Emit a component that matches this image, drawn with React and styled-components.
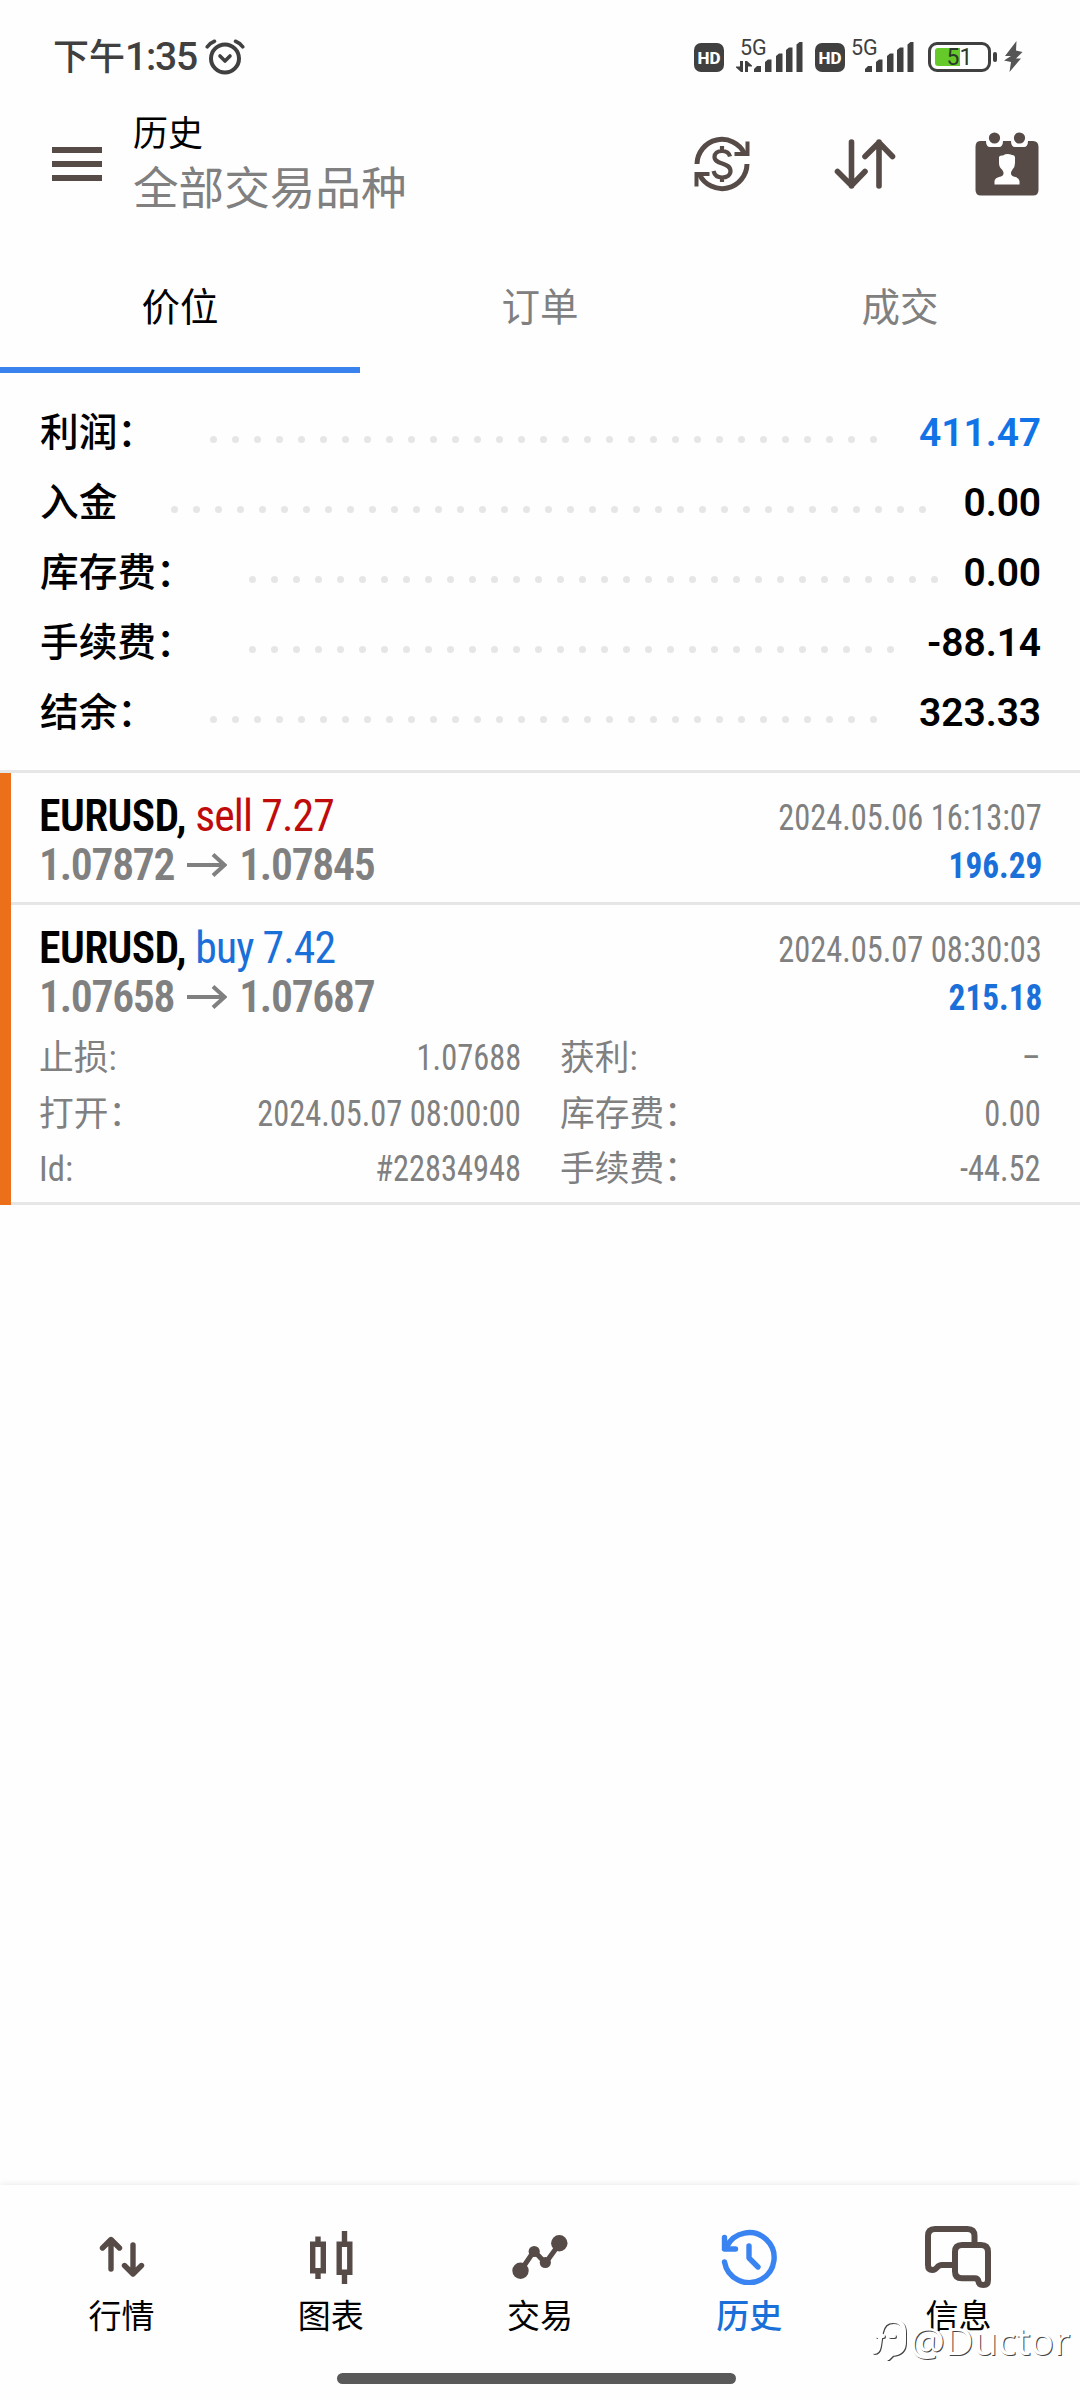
import React from "react";
import styled, { createGlobalStyle } from "styled-components";

const summary = [
  { label: "利润：", value: "411.47", blue: true },
  { label: "入金", value: "0.00" },
  { label: "库存费：", value: "0.00" },
  { label: "手续费：", value: "-88.14" },
  { label: "结余：", value: "323.33" },
];

const deals = [
  {
    symbol: "EURUSD",
    side: "sell",
    volume: "7.27",
    open: "1.07872",
    close: "1.07845",
    time: "2024.05.06 16:13:07",
    profit: "196.29",
    details: [],
  },
  {
    symbol: "EURUSD",
    side: "buy",
    volume: "7.42",
    open: "1.07658",
    close: "1.07687",
    time: "2024.05.07 08:30:03",
    profit: "215.18",
    details: [
      ["止损:", "1.07688"],
      ["获利:", "–"],
      ["打开：", "2024.05.07 08:00:00"],
      ["库存费：", "0.00"],
      ["Id:", "#22834948"],
      ["手续费：", "-44.52"],
    ],
  },
];

const AlarmIcon = () => (
  <svg width="40" height="36" viewBox="0 0 40 36" fill="none" stroke="#404040" strokeLinecap="round">
    <circle cx="20" cy="19.5" r="14" strokeWidth="4" />
    <path d="M15 17l5 5 5-5" strokeWidth="3.6" strokeLinejoin="round" />
    <path d="M2.3 7.8Q5 4 9.5 2.3M37.7 7.8Q35 4 30.5 2.3" strokeWidth="3.6" />
  </svg>
);

const Signal = () => (
  <svg width="49" height="32" viewBox="0 0 49 32" fill="#404040">
    <path d="M0 31V28L3 25H7V31Z" />
    <path d="M11 31V21L14 18.5H17.5V31Z" />
    <path d="M22 31V15L25 12.5H28.5V31Z" />
    <path d="M32 31V9L35 6.5H38.5V31Z" />
    <path d="M42.5 31V3.5L45.5 1H48.5V31Z" />
  </svg>
);

const DataArrows = () => (
  <svg width="16" height="12" viewBox="0 0 16 12" fill="#404040">
    <path d="M4 0H7V11H5L0 6.5V5.5H4Z" />
    <path d="M9 11V0H11L16 4.5V5.5H12V11Z" />
  </svg>
);

const Bolt = () => (
  <svg width="19" height="32" viewBox="0 0 19 32" fill="#555">
    <path d="M12.5 0L1 15H7L0 19.5L7 21L5.5 31L17 17.5H12L18.5 11L12 9.5Z" />
  </svg>
);

const MenuIcon = () => (
  <svg width="50" height="34" viewBox="0 0 50 34" fill="#564b47">
    <rect width="50" height="6" />
    <rect y="14" width="50" height="6" />
    <rect y="28" width="50" height="6" />
  </svg>
);

const CurrencyIcon = () => (
  <svg width="56" height="56" viewBox="0 0 56 56" fill="none" stroke="#564b47" strokeWidth="5">
    <path d="M3 28A25 25 0 0 1 50.5 17.5" />
    <path d="M53 28A25 25 0 0 1 5.5 38.5" />
    <path d="M40.5 18H53.5V5.5" strokeWidth="4" />
    <path d="M15.5 38H2.5V50.5" strokeWidth="4" />
    <path
      d="M36 20.5C35 16.5 31.5 15 28 15C23.5 15 20.5 17.5 20.5 21C20.5 29 36.5 26 36.5 35C36.5 39 33 41.5 28 41.5C23.5 41.5 20.5 39 19.5 35M28 10V15.5M28 41V46"
      strokeWidth="4.2"
    />
  </svg>
);

const SortIcon = () => (
  <svg width="62" height="50" viewBox="0 0 62 50" fill="none" stroke="#564b47" strokeWidth="5.6" strokeLinecap="round" strokeLinejoin="round">
    <path d="M17.5 3V47M3.5 32.5L17.5 46.5L31 32.5" />
    <path d="M45 47V3M31 17.5L45 3.5L58.5 17.5" />
  </svg>
);

const CalendarIcon = () => (
  <svg width="64" height="64" viewBox="0 0 64 64">
    <path
      fill="#564b47"
      d="M5 9H11C11 13 12.5 15 15 15H24C26.5 15 28 13 28 9H36C36 13 37.5 15 40 15H49C51.5 15 53 13 53 9H58Q63.5 9 63.5 15V58Q63.5 63.5 58 63.5H6Q0.5 63.5 0.5 58V15Q0.5 9 5 9Z"
    />
    <circle cx="19.5" cy="6" r="5.6" fill="#564b47" />
    <circle cx="44.5" cy="6" r="5.6" fill="#564b47" />
    <path
      fill="#fff"
      d="M19.5 52.5V49Q20 46 24 45Q28.5 44 28.5 41.5Q28.5 39.5 27 37.5Q24 35 24 31V25Q24.5 23 28 23.5Q32 21 37 23Q40.5 23 40 27V31Q40 35 37.5 37.5Q36 39.5 36 41.5Q36 44 40.5 45Q44 46 44.5 49V52.5Z"
    />
  </svg>
);

const QuotesIcon = () => (
  <svg width="46" height="42" viewBox="0 0 46 42" fill="none" stroke="#564b47" strokeWidth="5.4" strokeLinecap="round" strokeLinejoin="round">
    <path d="M12 33V4M3.5 12L12 3.5L20.5 12" />
    <path d="M34 9V37M25.5 29.5L34 38L42.5 29.5" />
  </svg>
);

const ChartIcon = () => (
  <svg width="44" height="54" viewBox="0 0 44 54" fill="none" stroke="#564b47" strokeWidth="5.4">
    <path d="M3.7 14.2H14.3V40.8H3.7ZM9 6.5V14M9 41V49" />
    <path d="M30.2 14.2H40.8V42.3H30.2ZM35.5 1V14M35.5 42V54" />
  </svg>
);

const TradeIcon = () => (
  <svg width="56" height="46" viewBox="0 0 56 46" fill="#564b47">
    <path d="M8.5 37L22 17L33.5 29L48 9" fill="none" stroke="#564b47" strokeWidth="5" />
    <circle cx="8.5" cy="36.7" r="8.2" />
    <circle cx="22.2" cy="17.5" r="5.6" />
    <circle cx="33.3" cy="28.5" r="5.6" />
    <circle cx="47.3" cy="9.2" r="8.2" />
  </svg>
);

const HistoryIcon = () => (
  <svg width="56" height="56" viewBox="0 0 56 56" fill="none" stroke="#3a84f2" strokeWidth="5.4" strokeLinecap="round" strokeLinejoin="round">
    <path d="M3.5 33A25 25 0 1 0 5.5 18" />
    <path d="M3.5 8.5V20H14.5M3.5 20L8 14" />
    <path d="M28 17V29L37 38" />
  </svg>
);

const MessagesIcon = () => (
  <svg width="66" height="62" viewBox="0 0 66 62" fill="none" stroke="#564b47" strokeWidth="6" strokeLinejoin="round">
    <path d="M49.5 17V10Q49.5 3 42.5 3H10Q3 3 3 10V39Q3 44 7.5 44Q10 44 12 41.5Q14 39 17 39H28" />
    <path d="M37 19H56Q63 19 63 26V54Q63 59 58.5 59Q53.8 59 53.5 55.5Q53 52.3 49.5 52.3H37Q30 52.3 30 45.5V26Q30 19 37 19Z" />
  </svg>
);

const MarkIcon = () => (
  <svg width="38" height="44" viewBox="0 0 38 44" fill="none" strokeWidth="4" strokeLinecap="round">
    <path
      stroke="#444"
      transform="translate(1 1)"
      d="M3 34Q7 34 8 28L10 14Q12 3 22 3Q33 3 33 14V24Q33 35 21 36L17 40M6 18H12M19 18H23"
    />
    <path
      stroke="#fff"
      d="M3 34Q7 34 8 28L10 14Q12 3 22 3Q33 3 33 14V24Q33 35 21 36L17 40M6 18H12M19 18H23"
    />
  </svg>
);

const navItems = [
  { label: "行情", icon: <QuotesIcon /> },
  { label: "图表", icon: <ChartIcon /> },
  { label: "交易", icon: <TradeIcon /> },
  { label: "历史", icon: <HistoryIcon />, active: true },
  { label: "信息", icon: <MessagesIcon /> },
];

const Cellular = ({ data }) => (
  <Network>
    <Generation $data={data}>5G</Generation>
    <NetworkBars>
      <DataSlot $data={data}>{data && <DataArrows />}</DataSlot>
      <Signal />
    </NetworkBars>
  </Network>
);

const Deal = ({ deal }) => (
  <DealWrap $expanded={deal.details.length > 0}>
    <DealLine>
      <Symbol>
        {deal.symbol}, <Side $side={deal.side}>{deal.side} {deal.volume}</Side>
      </Symbol>
      <Time>{deal.time}</Time>
    </DealLine>
    <DealLine>
      <Prices>
        {deal.open}
        <Arrow width="40" height="24" viewBox="0 0 40 24">
          <path d="M0 12H37M26 1.5L37.5 12L26 22.5" />
        </Arrow>
        {deal.close}
      </Prices>
      <Profit>{deal.profit}</Profit>
    </DealLine>
    {deal.details.length > 0 && (
      <Details>
        {deal.details.map(([label, value]) => (
          <Detail key={label}>
            <span>{label}</span>
            <DetailValue>{value}</DetailValue>
          </Detail>
        ))}
      </Details>
    )}
  </DealWrap>
);

const App = () => {
  return (
    <Screen>
      <GlobalStyle />
      <StatusBar>
        <Clock>下午<ClockDigits>1:35</ClockDigits></Clock>
        <AlarmIcon />
        <StatusIcons>
          <HdBadge>HD</HdBadge>
          <Cellular data />
          <HdBadge>HD</HdBadge>
          <Cellular />
          <Battery>
            <BatteryFill />
            <BatteryText>51</BatteryText>
          </Battery>
          <BatteryTip />
          <Bolt />
        </StatusIcons>
      </StatusBar>

      <Header>
        <MenuIcon />
        <Titles>
          <Title>历史</Title>
          <SubTitle>全部交易品种</SubTitle>
        </Titles>
        <Actions>
          <CurrencyIcon />
          <SortIcon />
          <CalendarIcon />
        </Actions>
      </Header>

      <Tabs>
        <Tab $active>价位</Tab>
        <Tab>订单</Tab>
        <Tab>成交</Tab>
      </Tabs>

      <Summary>
        {summary.map((row) => (
          <SummaryRow key={row.label}>
            <SummaryLabel>{row.label}</SummaryLabel>
            <Dots>
              {Array.from({ length: 40 }, (_, i) => (
                <Dot key={i} />
              ))}
            </Dots>
            <SummaryValue $blue={row.blue}>{row.value}</SummaryValue>
          </SummaryRow>
        ))}
      </Summary>

      <DealList>
        {deals.map((deal) => (
          <Deal key={deal.time} deal={deal} />
        ))}
      </DealList>

      <Nav>
        <NavItems>
          {navItems.map((item) => (
            <NavItem key={item.label} $active={item.active}>
              <NavIcon>{item.icon}</NavIcon>
              {item.label}
            </NavItem>
          ))}
        </NavItems>
        <HomeBar />
        <Watermark>
          <MarkIcon />
          <span>@Ductor</span>
        </Watermark>
      </Nav>
    </Screen>
  );
};

const GlobalStyle = createGlobalStyle`
  * {
    box-sizing: border-box;
  }
  body {
    margin: 0;
    background: #fefefe;
    font-family: Roboto, "Noto Sans CJK SC", sans-serif;
  }
  svg {
    display: block;
    flex-shrink: 0;
  }
`;

const Screen = styled.div`
  display: flex;
  flex-direction: column;
  width: 1080px;
  height: 2400px;
  overflow: hidden;
  background: #fefefe;
`;

const StatusBar = styled.div`
  display: flex;
  align-items: center;
  height: 113px;
  padding: 1px 57px 0 53px;
  color: #404040;
`;
const Clock = styled.div`
  margin-right: 8px;
  padding-top: 1px;
  font-size: 36px;
  font-weight: 500;
  line-height: 52px;
  white-space: nowrap;
`;
const ClockDigits = styled.span`
  font-size: 39px;
  font-weight: 500;
  letter-spacing: -1.2px;
`;
const StatusIcons = styled.div`
  display: flex;
  align-items: center;
  margin-left: auto;
`;
const HdBadge = styled.div`
  width: 30px;
  height: 29px;
  border-radius: 7px;
  background: #404040;
  color: #fff;
  font-size: 17px;
  font-weight: 800;
  line-height: 30px;
  text-align: center;
`;
const Network = styled.div`
  position: relative;
  margin-right: 12px;
`;
const Generation = styled.div`
  position: absolute;
  left: ${(props) => (props.$data ? "16px" : "6px")};
  top: -4px;
  font-size: 21.5px;
  line-height: 22px;
`;
const NetworkBars = styled.div`
  display: flex;
  align-items: flex-end;
`;
const DataSlot = styled.div`
  width: ${(props) => (props.$data ? "30px" : "20px")};
  padding-left: ${(props) => (props.$data ? "12px" : "0")};
`;
const Battery = styled.div`
  position: relative;
  width: 63px;
  height: 30px;
  margin-left: 2px;
  padding: 3px 4px;
  border: 3px solid #404040;
  border-radius: 9px;
`;
const BatteryFill = styled.div`
  width: 25px;
  height: 18px;
  border-radius: 3px 0 0 3px;
  background: #66c92a;
`;
const BatteryText = styled.div`
  position: absolute;
  inset: 0;
  color: #2a3a2a;
  font-size: 23px;
  line-height: 25px;
  text-align: center;
`;
const BatteryTip = styled.div`
  width: 4px;
  height: 10px;
  margin: 0 7px 0 2px;
  border-radius: 2px;
  background: #404040;
`;

const Header = styled.div`
  display: flex;
  align-items: center;
  height: 102px;
  padding: 0 41px 0 52px;
`;
const Titles = styled.div`
  margin-left: 31px;
  padding-top: 7px;
`;
const Title = styled.div`
  color: #000;
  font-size: 35px;
  line-height: 44px;
`;
const SubTitle = styled.div`
  color: #808080;
  font-size: 45.6px;
  line-height: 65px;
`;
const Actions = styled.div`
  display: flex;
  align-items: center;
  margin-left: auto;

  svg:nth-child(2) {
    margin: 0 79px 0 84px;
  }
`;

const Tabs = styled.div`
  display: grid;
  grid-template-columns: repeat(3, 1fr);
  height: 158px;
`;
const Tab = styled.div`
  padding-top: 63px;
  border-bottom: 6px solid ${(props) => (props.$active ? "#3a82ee" : "transparent")};
  color: ${(props) => (props.$active ? "#000" : "#808080")};
  font-size: 38.5px;
  line-height: 60px;
  text-align: center;
`;

const Summary = styled.div`
  height: 400px;
  padding: 24px 39px 0 40px;
  border-bottom: 3px solid #e6e6e6;
`;
const SummaryRow = styled.div`
  display: flex;
  align-items: center;
  height: 70px;
  color: #000;
`;
const SummaryLabel = styled.div`
  padding-bottom: 7px;
  font-size: 38.7px;
  font-weight: 500;
`;
const Dots = styled.div`
  display: flex;
  flex: 1;
  flex-wrap: wrap;
  gap: 15px;
  height: 7px;
  margin: 15px 23px 0 54px;
  overflow: hidden;
`;
const Dot = styled.div`
  width: 7px;
  height: 7px;
  border-radius: 50%;
  background: #e6e6e6;
`;
const SummaryValue = styled.div`
  padding-top: 1px;
  color: ${(props) => (props.$blue ? "#1173e6" : "#000")};
  font-size: 39px;
  font-weight: 600;
  letter-spacing: -0.1px;
`;

const DealList = styled.div`
  border-left: 11px solid #eb7019;
`;
const DealWrap = styled.div`
  padding: 16px 38px ${(props) => (props.$expanded ? "5.5px" : "15px")} 28px;
  border-bottom: 3px solid #e6e6e6;
  font-stretch: 75%;
`;
const DealLine = styled.div`
  display: flex;
  justify-content: space-between;
  height: 49px;
  line-height: 52px;
  white-space: nowrap;
`;
const Symbol = styled.div`
  padding-top: 1px;
  color: #000;
  font-size: 43.7px;
  font-weight: 600;
  letter-spacing: -0.6px;
`;
const Side = styled.span`
  color: ${(props) => (props.$side === "sell" ? "#c00b0b" : "#1a70d8")};
  font-weight: 400;
  letter-spacing: -0.9px;
`;
/* figures are narrower than the condensed face allows */
const Time = styled.div`
  padding-top: 3px;
  color: #808080;
  font-size: 36px;
  transform: scaleX(0.9);
  transform-origin: right;
`;
const Prices = styled.div`
  display: flex;
  align-items: center;
  padding-top: 4px;
  color: #808080;
  font-size: 43.7px;
  font-weight: 600;
  letter-spacing: -1.3px;
`;
const Arrow = styled.svg`
  margin: 0 12px 0 13px;
  fill: none;
  stroke: #808080;
  stroke-width: 4;
`;
const Profit = styled.div`
  padding-top: 2px;
  color: #1a70d8;
  font-size: 36px;
  font-weight: 700;
  transform: scaleX(0.925);
  transform-origin: right;
`;
const Details = styled.div`
  display: grid;
  grid-template-columns: 482px 481px;
  column-gap: 39px;
  margin-right: -2px;
  padding-top: 11px;
`;
const Detail = styled.div`
  display: flex;
  justify-content: space-between;
  height: 55.5px;
  color: #808080;
  font-size: 34.7px;
  line-height: 56px;
`;
const DetailValue = styled.span`
  font-size: 36px;
  transform: scaleX(0.9);
  transform-origin: right;
`;

const Nav = styled.div`
  position: relative;
  height: 215px;
  margin-top: auto;
  background: #fefefe;
  box-shadow: 0 -1px 6px rgba(0, 0, 0, 0.08);
`;
const NavItems = styled.div`
  display: flex;
  padding: 0 17px;
`;
const NavItem = styled.div`
  display: flex;
  flex: 1;
  flex-direction: column;
  align-items: center;
  padding-top: 38px;
  color: ${(props) => (props.$active ? "#1a70d8" : "#000")};
  font-size: 33px;
  font-weight: ${(props) => (props.$active ? 500 : 400)};
  line-height: 52px;
`;
const NavIcon = styled.div`
  display: flex;
  align-items: center;
  height: 68px;
`;
const HomeBar = styled.div`
  width: 399px;
  height: 11px;
  margin: 30px 0 0 337px;
  border-radius: 6px;
  background: #595959;
`;
const Watermark = styled.div`
  position: absolute;
  right: 10px;
  bottom: 36px;
  display: flex;
  align-items: center;
  gap: 1px;
  color: #fff;
  font-family: "Noto Sans", sans-serif;
  font-size: 39px;
  line-height: 48px;
  text-shadow: 1px 1px 0 #444;
`;

export default App;
